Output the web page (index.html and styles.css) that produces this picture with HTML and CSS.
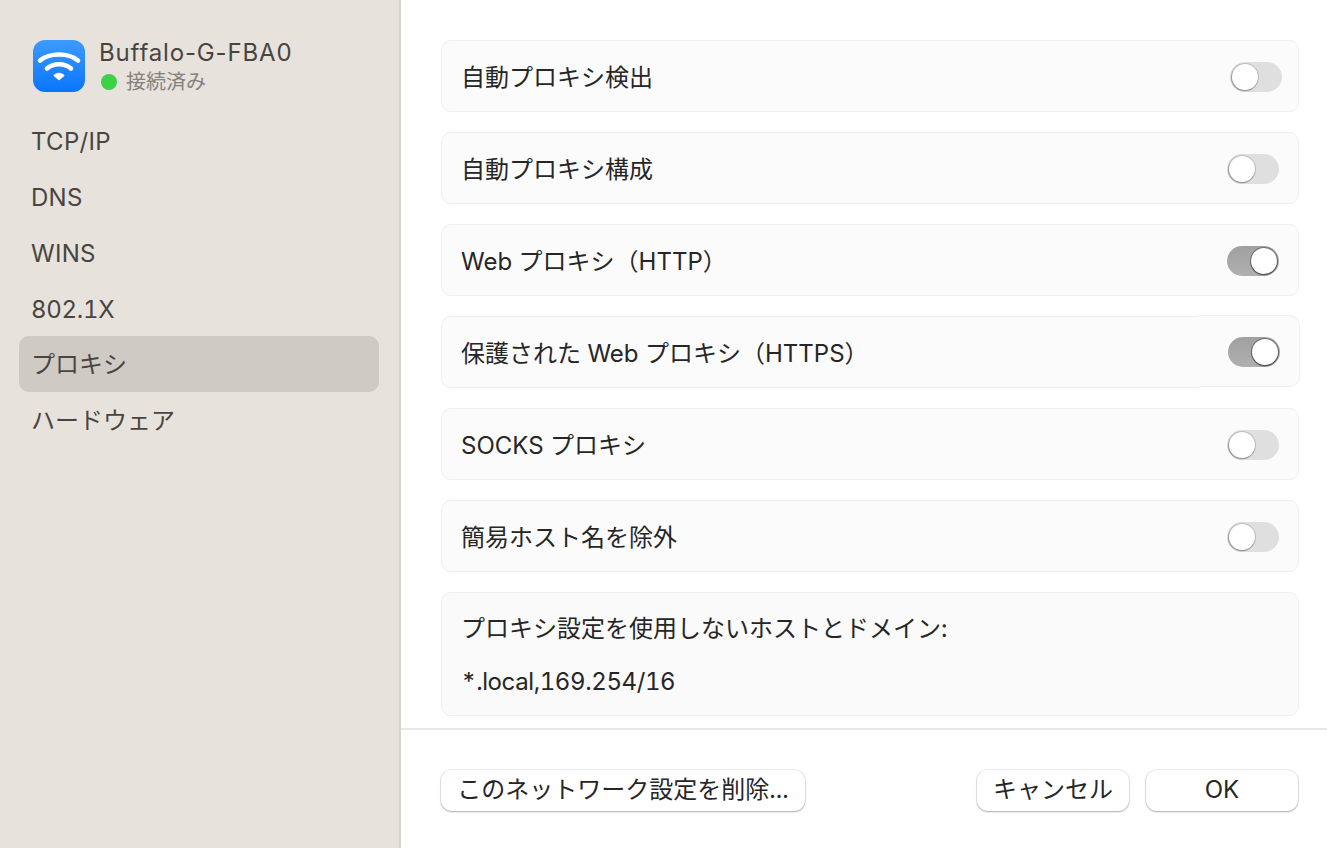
FILE: index.html
```html
<!DOCTYPE html>
<html lang="ja">
<head>
<meta charset="utf-8">
<title>プロキシ</title>
<link rel="stylesheet" href="styles.css">
</head>
<body>
<div class="window">
  <aside class="sidebar">
    <div class="network">
      <div class="wifi-icon">
        <svg width="52" height="52" viewBox="0 0 52 52">
          <defs>
            <linearGradient id="wifi-bg" x1="0" y1="0" x2="0" y2="1">
              <stop offset="0" stop-color="#3d9bff"/>
              <stop offset="1" stop-color="#0a75fb"/>
            </linearGradient>
          </defs>
          <rect width="52" height="52" rx="12" fill="url(#wifi-bg)"/>
          <path d="M7 20.500C17 12.500 35 12.500 45 20.500" fill="none" stroke="#fff" stroke-width="4.600" stroke-linecap="round"/>
          <path d="M14 28.500C20.500 22.800 31.500 22.800 38 28.500" fill="none" stroke="#fff" stroke-width="4.600" stroke-linecap="round"/>
          <path d="M20.800 35.500C24 32.500 28 32.500 31.200 35.500L26 40Z" fill="#fff" stroke="#fff" stroke-width="1" stroke-linejoin="round"/>
        </svg>
      </div>
      <div class="network-text">
        <div class="network-name">Buffalo-G-FBA0</div>
        <div class="network-status"><span class="status-dot"></span><span>接続済み</span></div>
      </div>
    </div>
    <nav class="nav">
      <div class="nav-item">TCP/IP</div>
      <div class="nav-item">DNS</div>
      <div class="nav-item">WINS</div>
      <div class="nav-item nav-num">802.1X</div>
      <div class="nav-item nav-jp nav-active">プロキシ</div>
      <div class="nav-item nav-jp">ハードウェア</div>
    </nav>
  </aside>
  <main class="main">
    <div class="rows">
      <div class="row"><span class="label">自動プロキシ検出</span><span class="toggle toggle-first"><span class="knob"></span></span></div>
      <div class="row"><span class="label">自動プロキシ構成</span><span class="toggle"><span class="knob"></span></span></div>
      <div class="row"><span class="label">Web プロキシ（HTTP）</span><span class="toggle toggle-on"><span class="knob"></span></span></div>
      <div class="row-split">
        <div class="split-left"><span class="label">保護された Web プロキシ（HTTPS）</span></div>
        <div class="split-right"><span class="toggle toggle-on"><span class="knob"></span></span></div>
      </div>
      <div class="row"><span class="label">SOCKS プロキシ</span><span class="toggle"><span class="knob"></span></span></div>
      <div class="row"><span class="label">簡易ホスト名を除外</span><span class="toggle"><span class="knob"></span></span></div>
      <div class="row-block">
        <div class="block-label">プロキシ設定を使用しないホストとドメイン:</div>
        <div class="block-value">*.local,169.254/16</div>
      </div>
    </div>
    <div class="footer">
      <button class="btn btn-delete">このネットワーク設定を削除...</button>
      <div class="footer-right">
        <button class="btn btn-cancel">キャンセル</button>
        <button class="btn btn-ok">OK</button>
      </div>
    </div>
  </main>
</div>
</body>
</html>
```

FILE: styles.css
```css
* { box-sizing: border-box; }
html, body { margin: 0; height: 100%; }
body {
  font-family: Inter, "Noto Sans CJK JP", sans-serif;
  font-size: 24px;
  color: #262626;
  background: #fff;
  overflow: hidden;
  font-variant-numeric: tabular-nums;
}
.window { display: flex; width: 1327px; height: 848px; }
.sidebar {
  width: 401px;
  flex: none;
  background: #e7e2dc;
  border-right: 2px solid #d6d2cc;
  padding: 40px 20px 0 19px;
  color: #484541;
}
.network { display: flex; align-items: flex-start; padding-left: 14px; height: 66px; }
.wifi-icon { width: 52px; height: 52px; flex: none; }
.wifi-icon svg { display: block; }
.network-text { margin-left: 14px; }
.network-name { line-height: 26px; letter-spacing: 0.85px; margin-left: 0; font-variant-numeric: normal; }
.network-status { display: flex; align-items: center; font-size: 20px; line-height: 32px; color: #84817d; margin-left: 2px; }
.status-dot { width: 16px; height: 16px; border-radius: 50%; background: #3cd146; margin-right: 9px; }
.nav { display: flex; flex-direction: column; margin-top: 6px; }
.nav-item { height: 56px; line-height: 60px; padding-left: 12px; border-radius: 10px; overflow: hidden; letter-spacing: 0.3px; }
.nav-num { letter-spacing: -0.3px; }
.nav-jp { line-height: 58px; letter-spacing: 0; }
.nav-active { background: #cfcac4; }
.main { flex: 1; padding: 40px 28px 0 40px; }
.rows { display: flex; flex-direction: column; gap: 20px; height: 688px; }
.row, .split-left, .split-right, .row-block { background: #fbfbfb; border: 1px solid #efefef; }
.row {
  height: 72px;
  border-radius: 10px;
  display: flex;
  align-items: center;
  justify-content: space-between;
  padding: 0 19px 0 20px;
}
.row-split { display: flex; align-items: flex-start; height: 72px; margin-right: -1px; }
.split-left {
  width: 758px;
  height: 72px;
  border-right: 0;
  border-radius: 10px 0 0 10px;
  display: flex;
  align-items: center;
  padding-left: 19px;
}
.split-right {
  flex: 1;
  height: 72px;
  margin-top: -1px;
  border-left: 0;
  border-radius: 0 10px 10px 0;
  display: flex;
  align-items: center;
  justify-content: flex-end;
  padding-right: 19px;
}
.label { white-space: nowrap; position: relative; top: -1px; margin-left: -1px; }
.split-left .label { margin-left: 0; }
.toggle {
  position: relative;
  display: block;
  width: 52px;
  height: 30px;
  border-radius: 15px;
  background: #dfdfdf;
  flex: none;
  margin-top: 2px;
}
.toggle-first { margin-right: -3px; }
.toggle-on { background: linear-gradient(#a0a0a0, #b0b0b0); }
.knob {
  position: absolute;
  top: 2px;
  left: 2px;
  width: 26px;
  height: 26px;
  border-radius: 50%;
  background: #fff;
  box-shadow: 0 0 0 1px rgba(0,0,0,.14), -0.5px 1px 1px 0.5px rgba(0,0,0,.22);
}
.toggle-on .knob { left: 24px; box-shadow: 0 0 0 1px rgba(0,0,0,.3), 0 1px 1px 0.5px rgba(0,0,0,.35); }
.row-block { height: 124px; border-radius: 10px; padding: 21px 19px 0; background: #fafafa; }
.block-label { line-height: 30px; }
.block-value { line-height: 30px; margin-top: 23px; letter-spacing: -0.4px; }
.footer {
  display: flex;
  justify-content: space-between;
  align-items: flex-start;
  margin: 0 -28px 0 -40px;
  padding: 40px 29px 0 40px;
  border-top: 2px solid #e6e6e6;
}
.footer-right { display: flex; gap: 17px; }
.btn {
  font: inherit;
  color: #262626;
  height: 41px;
  border: 0;
  border-radius: 11px;
  background: #fff;
  box-shadow: 0 0 0 1px rgba(0,0,0,.07), 0 1px 2px rgba(0,0,0,.28);
  padding: 0;
  display: flex;
  align-items: center;
  justify-content: center;
  white-space: nowrap;
}
.btn-delete { width: 364px; padding-bottom: 6px; }
.btn-cancel { width: 152px; padding-bottom: 6px; }
.btn-ok { width: 152px; padding-bottom: 2px; }
```
